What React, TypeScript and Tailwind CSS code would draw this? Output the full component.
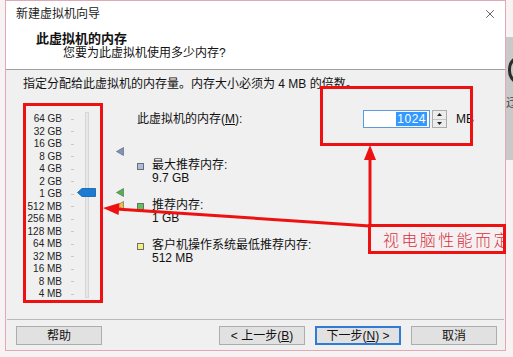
import { X } from 'lucide-react'

const scale = ['64 GB', '32 GB', '16 GB', '8 GB', '4 GB', '2 GB', '1 GB', '512 MB', '256 MB', '128 MB', '64 MB', '32 MB', '16 MB', '8 MB', '4 MB']

const Marker = ({ color, top }: { color: string; top: number }) => (
  <svg className="absolute left-[110px]" style={{ top }} width="8" height="9" viewBox="0 0 8 9">
    <polygon points="0.5,4.5 7.5,0.5 7.5,8.5" fill={color} stroke="#5a5a5a" strokeWidth="0.6" />
  </svg>
)

const Info = ({ color, label, value }: { color: string; label: string; value: string }) => (
  <div className="flex">
    <div className={`mt-[4px] w-[7px] h-[7px] border border-[#6d6d6d] ${color}`} />
    <div className="ml-[8px] leading-[13px]">
      <div>{label}</div>
      <div>{value}</div>
    </div>
  </div>
)

const Btn = ({ children, focus }: { children: React.ReactNode; focus?: boolean }) => (
  <button
    type="button"
    className={`w-[86px] h-[19px] flex items-center justify-center bg-[#e1e1e1] text-[12px] leading-none ${
      focus ? 'border-2 border-[#2f7bd6]' : 'border border-[#adadad]'
    }`}
  >
    {children}
  </button>
)

export default function App() {
  return (
    <div className="relative w-[513px] h-[357px] overflow-hidden bg-[#f7f2f4] text-[12px] text-[#111] font-['Liberation_Sans','Noto_Sans_CJK_SC',sans-serif]">
      {/* desktop behind the dialog */}
      <div className="absolute left-[506px] top-[37px] w-[7px] h-[123px] bg-[#c9c9c9]" />
      <div className="absolute left-[508px] top-[55px] w-[28px] h-[30px] rounded-full border-[3px] border-[#2d2d2d]" />
      <div className="absolute left-[506px] top-[94px] text-[12px] text-[#444]">迂</div>

      <div className="ml-[5px] w-[501px] h-[351px] flex flex-col border border-[#e3a7b5] bg-[#f0f0f0]">
        <div className="bg-white">
          <div className="h-[25px] flex items-center justify-between pl-[10px] pr-[8px] text-[#222]">
            <span>新建虚拟机向导</span>
            <X size={14} strokeWidth={1.2} className="text-[#222]" />
          </div>
          <div className="h-[44px] border-b border-[#a0a0a0]">
            <div className="pl-[30px] pt-[5px] leading-[16px] font-bold text-[13px]">此虚拟机的内存</div>
            <div className="pl-[57px] leading-[12px]">您要为此虚拟机使用多少内存?</div>
          </div>
        </div>

        <div className="flex-1 flex flex-col">
          <div className="pl-[17px] pt-[6px] leading-[16px]">指定分配给此虚拟机的内存量。内存大小必须为 4 MB 的倍数。</div>

          <div className="relative flex mt-[11px] pl-[18px]">
            <div className="relative w-[78px] h-[198px] pt-[10px] flex">
              <div className="w-[38px] text-right text-[10px] leading-[12.5px] text-[#222]">
                {scale.map((s) => (
                  <div key={s}>{s}</div>
                ))}
              </div>
              <div className="ml-[9px] w-[3px] flex flex-col">
                {scale.map((s) => (
                  <div key={s} className="h-[12.5px] flex items-center">
                    <div className="w-[3px] h-px bg-[#c8c8c8]" />
                  </div>
                ))}
              </div>
              <div className="absolute left-[61px] top-[9px] w-[4px] h-[186px] border border-[#d6d6d6] bg-[#e7e7e7]" />
              <svg className="absolute left-[53px] top-[85px]" width="19" height="9" viewBox="0 0 19 9">
                <polygon points="0.5,4.5 5,0.5 18.5,0.5 18.5,8.5 5,8.5" fill="#1a7bd4" stroke="#0f5aa3" strokeWidth="0.8" />
              </svg>
            </div>

            <Marker color="#7b95c6" top={44} />
            <Marker color="#4cb84c" top={85} />
            <Marker color="#f0c040" top={98} />

            <div className="ml-[35px] pt-[7px] flex flex-col">
              <div className="flex items-center h-[18px]">
                <span className="w-[226px]">
                  此虚拟机的内存(<span className="underline">M</span>):
                </span>
                <div className="w-[67px] h-[18px] border border-[#5a9ae0] bg-white flex items-center justify-end pr-[2px]">
                  <span className="bg-[#3399ff] text-white leading-[14px] px-px tracking-[0.5px]">1024</span>
                </div>
                <div className="ml-[2px] w-[15px] h-[18px] border border-[#acacac] bg-[#ececec] flex flex-col">
                  <div className="flex-1 flex items-center justify-center border-b border-[#c4c4c4]">
                    <svg width="5" height="3" viewBox="0 0 5 3"><polygon points="2.5,0 5,3 0,3" fill="#222" /></svg>
                  </div>
                  <div className="flex-1 flex items-center justify-center">
                    <svg width="5" height="3" viewBox="0 0 5 3"><polygon points="0,0 5,0 2.5,3" fill="#222" /></svg>
                  </div>
                </div>
                <span className="ml-[9px]">MB</span>
              </div>

              <div className="mt-[31px] flex flex-col gap-[14px]">
                <Info color="bg-[#a8bde0]" label="最大推荐内存:" value="9.7 GB" />
                <Info color="bg-[#5cc45c]" label="推荐内存:" value="1 GB" />
                <Info color="bg-[#f5ee7a]" label="客户机操作系统最低推荐内存:" value="512 MB" />
              </div>
            </div>
          </div>

          <div className="flex-1" />
          <div className="mx-px border-t border-[#b9b9b9]" />
          <div className="flex items-center pl-[10px] pr-[8px] pt-[6px] pb-[5px]">
            <Btn>帮助</Btn>
            <div className="flex-1" />
            <div className="flex gap-[10px]">
              <Btn>
                &lt; 上一步(<span className="underline">B</span>)
              </Btn>
              <Btn focus>
                下一步(<span className="underline">N</span>) &gt;
              </Btn>
              <Btn>取消</Btn>
            </div>
          </div>
        </div>
      </div>

      {/* annotations */}
      <div className="absolute left-[23px] top-[103px] w-[80px] h-[200px] border-[3px] border-[#ee1111]" />
      <div className="absolute left-[320px] top-[86px] w-[153px] h-[60px] border-[3px] border-[#ee1111]" />
      <div className="absolute left-[368px] top-[224px] w-[138px] h-[30px] border-[3px] border-[#ee1111] bg-[#f5f1f3] overflow-hidden whitespace-nowrap">
        <span className="block pl-[12px] leading-[24px] text-[16px] tracking-[2.4px] text-[#d9323e] font-['Noto_Sans_CJK_SC',sans-serif] font-light">
          视电脑性能而定
        </span>
      </div>
      <svg className="absolute inset-0 pointer-events-none" width="513" height="357" viewBox="0 0 513 357">
        <line x1="370" y1="226" x2="370" y2="158" stroke="#ee1111" strokeWidth="3" />
        <polygon points="370,145 364,160 376,160" fill="#ee1111" />
        <line x1="370" y1="226" x2="116" y2="209" stroke="#ee1111" strokeWidth="3" />
        <polygon points="103,208 118.6,215.1 119.4,203.1" fill="#ee1111" />
      </svg>
    </div>
  )
}
